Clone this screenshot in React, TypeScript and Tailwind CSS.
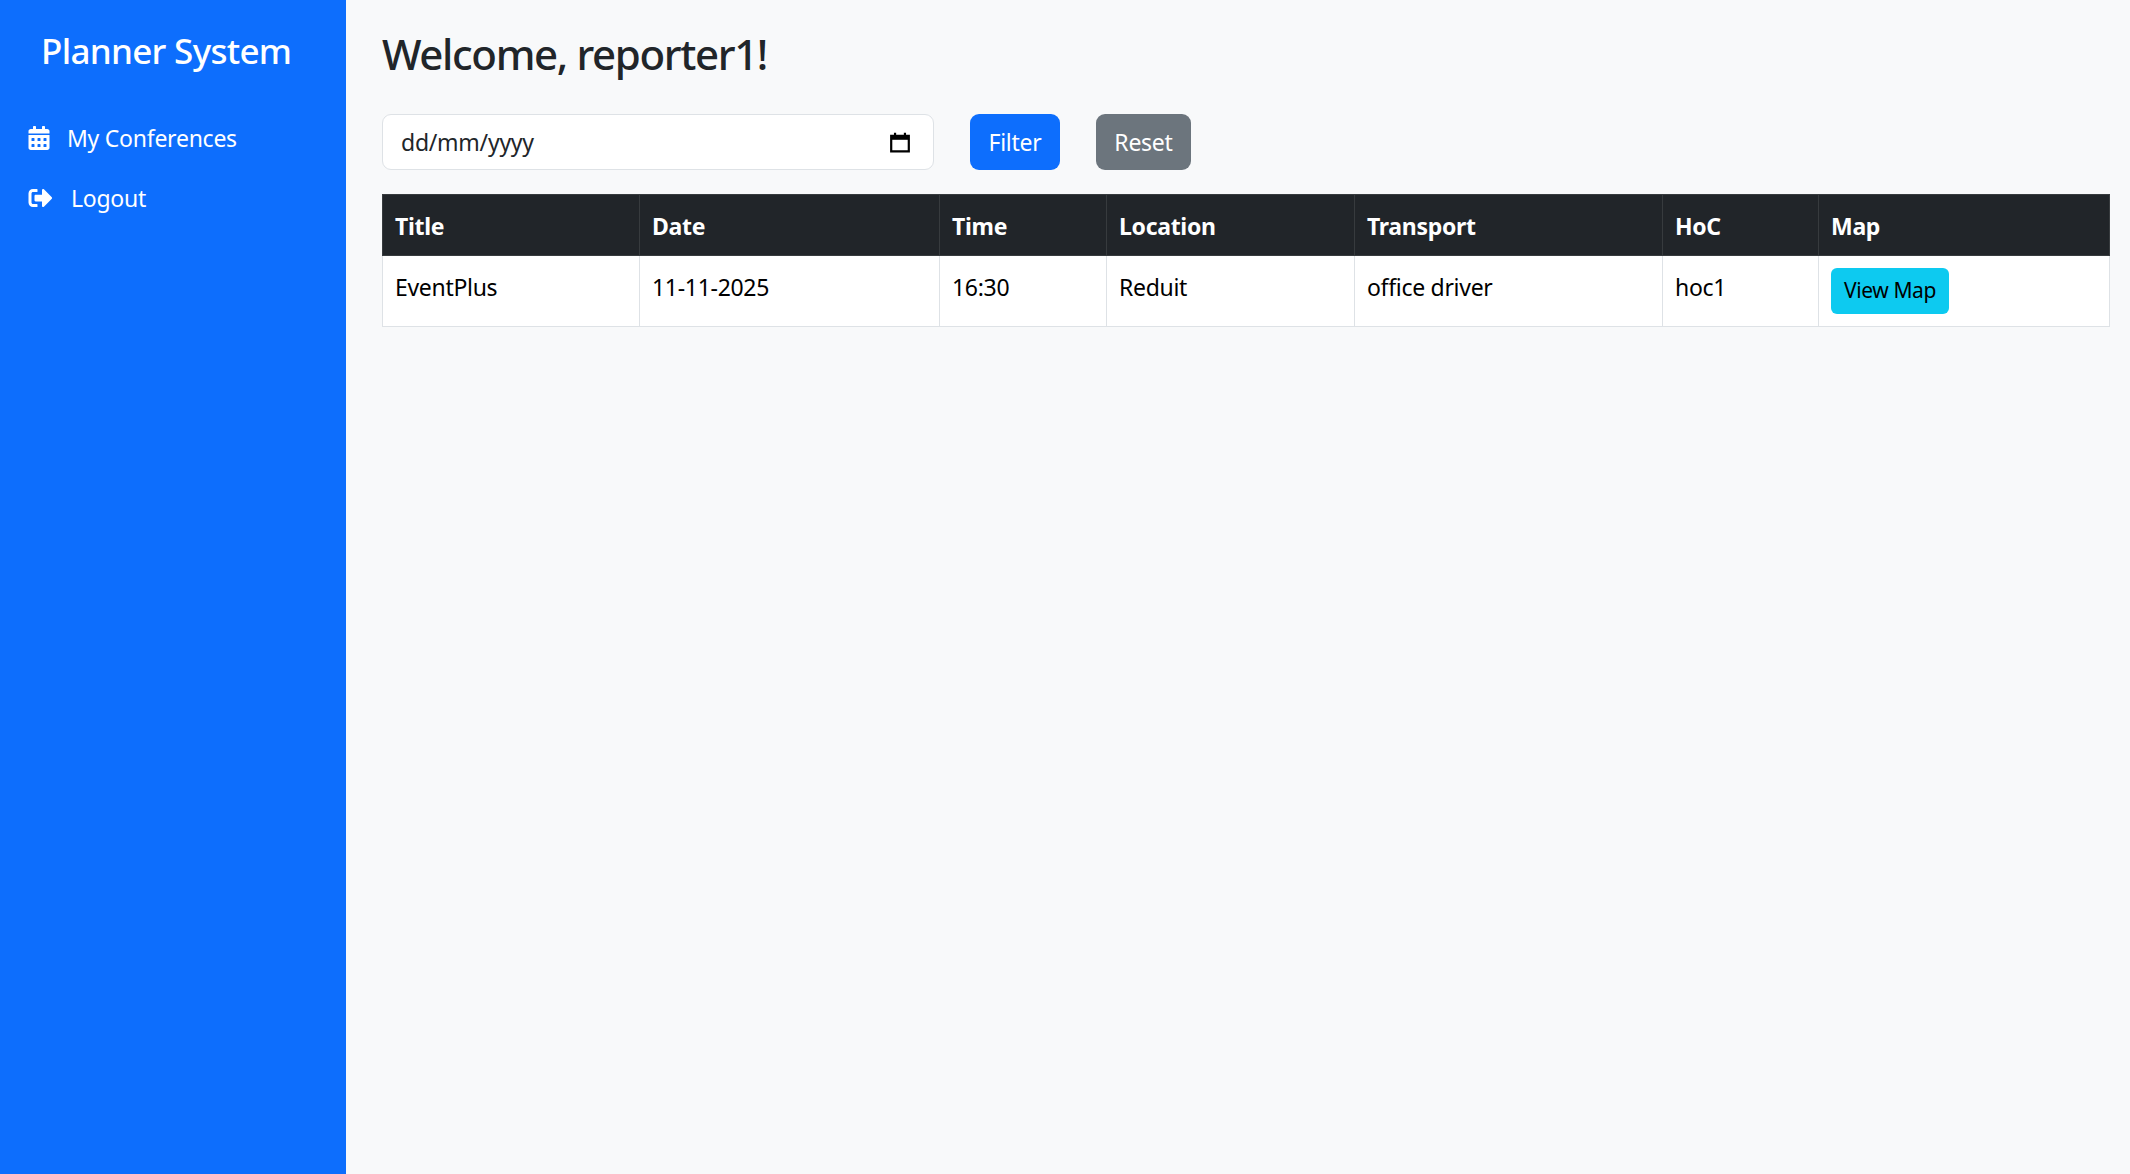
import { FaCalendarAlt, FaSignOutAlt } from 'react-icons/fa';

const FONT = "font-['Noto_Sans','Open_Sans',sans-serif]";

const columns = [
  { label: 'Title', value: 'EventPlus', width: 'w-[257px]' },
  { label: 'Date', value: '11-11-2025', width: 'w-[300px]' },
  { label: 'Time', value: '16:30', width: 'w-[167px]' },
  { label: 'Location', value: 'Reduit', width: 'w-[248px]' },
  { label: 'Transport', value: 'office driver', width: 'w-[308px]' },
  { label: 'HoC', value: 'hoc1', width: 'w-[156px]' },
  { label: 'Map', value: '', width: 'w-[291px]' },
];

export default function App() {
  return (
    <div className={`flex h-[1174px] bg-[#f8f9fa] text-[#212529] ${FONT}`}>
      <aside className="w-[346px] shrink-0 bg-[#0d6efd] text-white">
        <h4 className="pl-[41px] pt-[26px] text-[35px] leading-[50px] font-medium tracking-[-0.7px]">Planner System</h4>
        <nav className="mt-[43px] flex flex-col gap-[22px] pl-[28px] text-[23px] leading-[38px] tracking-[-0.25px]">
          <a className="flex items-center gap-[17px]">
            <FaCalendarAlt className="h-[24px] w-[22px]" />
            My Conferences
          </a>
          <a className="flex items-center gap-[18px]">
            <FaSignOutAlt className="h-[24px] w-[25px]" />
            Logout
          </a>
        </nav>
      </aside>
      <main className="flex-1 pl-[36px] pr-[20px]">
        <h2 className="pt-[21px] text-[42px] leading-[66px] font-medium tracking-[-1.35px]">Welcome, reporter1!</h2>
        <div className="mt-[27px] flex items-center text-[23px] tracking-[-0.25px]">
          <div className="flex h-[56px] w-[552px] items-center justify-between rounded-[9px] border border-[#dee2e6] bg-white pl-[18px] pr-[22px]">
            <span>dd/mm/yyyy</span>
            <svg viewBox="0 0 20 20" className="h-[22px] w-[22px]">
              <path d="M2 4.5h16v14H2z" fill="none" stroke="#000" strokeWidth="2" />
              <path d="M2 4h16v4H2z" fill="#000" />
              <path d="M5.5 1.5v3M14.5 1.5v3" stroke="#000" strokeWidth="2" />
            </svg>
          </div>
          <button className="ml-[36px] flex h-[56px] w-[90px] items-center justify-center rounded-[9px] bg-[#0d6efd] text-white">Filter</button>
          <button className="ml-[36px] flex h-[56px] w-[95px] items-center justify-center rounded-[9px] bg-[#6c757d] text-white">Reset</button>
        </div>
        <table className="mt-[24px] w-[1727px] table-fixed border-collapse text-[23px] tracking-[-0.3px]">
          <thead>
            <tr className="bg-[#212529] text-white">
              {columns.map(col => (
                <th key={col.label} className={`${col.width} h-[61px] border border-[#373b3e] px-[12px] pt-[2px] text-left font-bold`}>
                  {col.label}
                </th>
              ))}
            </tr>
          </thead>
          <tbody>
            <tr className="bg-white text-black">
              {columns.map(col => (
                <td key={col.label} className="h-[71px] border border-[#dee2e6] px-[12px] pb-[8px]">
                  {col.label === 'Map' ? (
                    <button className="mt-[7px] flex h-[46px] w-[118px] items-center justify-center rounded-[6px] bg-[#0dcaf0] text-[21px] tracking-[-0.4px] text-black">
                      View Map
                    </button>
                  ) : (
                    col.value
                  )}
                </td>
              ))}
            </tr>
          </tbody>
        </table>
      </main>
    </div>
  );
}
